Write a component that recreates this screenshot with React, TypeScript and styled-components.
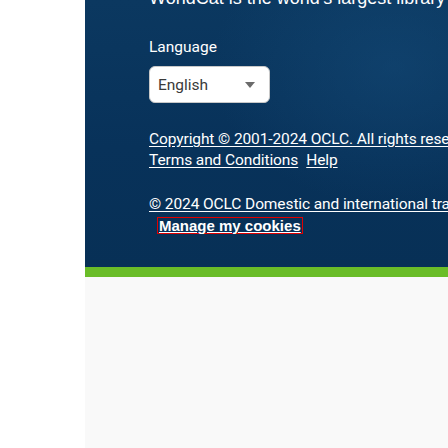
import React from 'react';
import styled, { createGlobalStyle } from 'styled-components';

const GlobalStyle = createGlobalStyle`
  html, body {
    margin: 0;
    padding: 0;
    height: 100%;
    overflow: hidden;
    background: #fff;
  }
  #root {
    height: 100%;
  }
`;

const Page = styled.div`
  display: flex;
  height: 100%;
  font-family: Roboto, 'Liberation Sans', Arial, sans-serif;
`;

const Gutter = styled.div`
  width: 85px;
  flex-shrink: 0;
  background: #fff;
`;

const Main = styled.div`
  flex: 1;
  display: flex;
  flex-direction: column;
  min-width: 0;
  background: #f9f9f9;
`;

const Footer = styled.footer`
  height: 267px;
  box-sizing: border-box;
  padding-left: 64px;
  overflow: hidden;
  white-space: nowrap;
  color: #fff;
  background:
    radial-gradient(ellipse 260px 200px at 85% 25%, rgba(22, 78, 125, 0.45), transparent 70%),
    linear-gradient(180deg, #0b3860 0%, #08325a 55%, #073056 100%);
`;

const Tagline = styled.p`
  margin: -13px 0 0;
  font-family: 'Liberation Sans', Arial, sans-serif;
  font-size: 18px;
  line-height: 22px;
`;

const Label = styled.label`
  display: block;
  margin-top: 29px;
  font-size: 15.5px;
  line-height: 19px;
`;

const SelectBox = styled.div`
  margin-top: 9px;
  width: 121px;
  height: 37px;
  box-sizing: border-box;
  border: 1px solid #c8c8c8;
  border-radius: 6px;
  background: #fff;
  display: flex;
  align-items: center;
  padding: 0 14px 0 8px;
  color: #3a3a3a;
  font-size: 15.5px;
`;

const Caret = styled.span`
  margin-left: auto;
  width: 0;
  height: 0;
  border-left: 5.5px solid transparent;
  border-right: 5.5px solid transparent;
  border-top: 6px solid #6b6b6b;
`;

const LinkBlock = styled.div<{ $top: number }>`
  margin-top: ${(p) => p.$top}px;
  font-size: 15.5px;
  letter-spacing: -0.1px;
  line-height: 20.7px;
`;

const Row = styled.div`
  display: flex;
  gap: 8px;
`;

const Link = styled.a`
  color: #fff;
  text-decoration: underline;
  text-underline-offset: 2px;
`;

const CookieButton = styled.button`
  margin: 2px 0 0 8px;
  padding: 0 1px;
  border: 1px solid #e00000;
  background: transparent;
  color: #fff;
  font-family: 'Liberation Sans', Arial, sans-serif;
  font-weight: 700;
  font-size: 15px;
  line-height: 15px;
  text-decoration: underline;
  cursor: pointer;
`;

const GreenBar = styled.div`
  height: 10px;
  background: #6abd28;
`;

const Filler = styled.div`
  flex: 1;
  background: #f9f9f9;
`;

export default function App() {
  return (
    <>
      <GlobalStyle />
      <Page>
        <Gutter />
        <Main>
          <Footer>
            <Tagline>
              WorldCat is the world's largest library catalog, helping you find library materials online.
            </Tagline>
            <Label>Language</Label>
            <SelectBox>
              English
              <Caret />
            </SelectBox>
            <LinkBlock $top={26}>
              <div>
                <Link href="#">Copyright © 2001-2024 OCLC. All rights reserved.</Link>
              </div>
              <Row>
                <Link href="#">Terms and Conditions</Link>
                <Link href="#">Help</Link>
              </Row>
            </LinkBlock>
            <LinkBlock $top={24}>
              <div>
                <Link href="#">© 2024 OCLC Domestic and international trademarks and/or service marks of OCLC, Inc.</Link>
              </div>
              <CookieButton>Manage my cookies</CookieButton>
            </LinkBlock>
          </Footer>
          <GreenBar />
          <Filler />
        </Main>
      </Page>
    </>
  );
}
